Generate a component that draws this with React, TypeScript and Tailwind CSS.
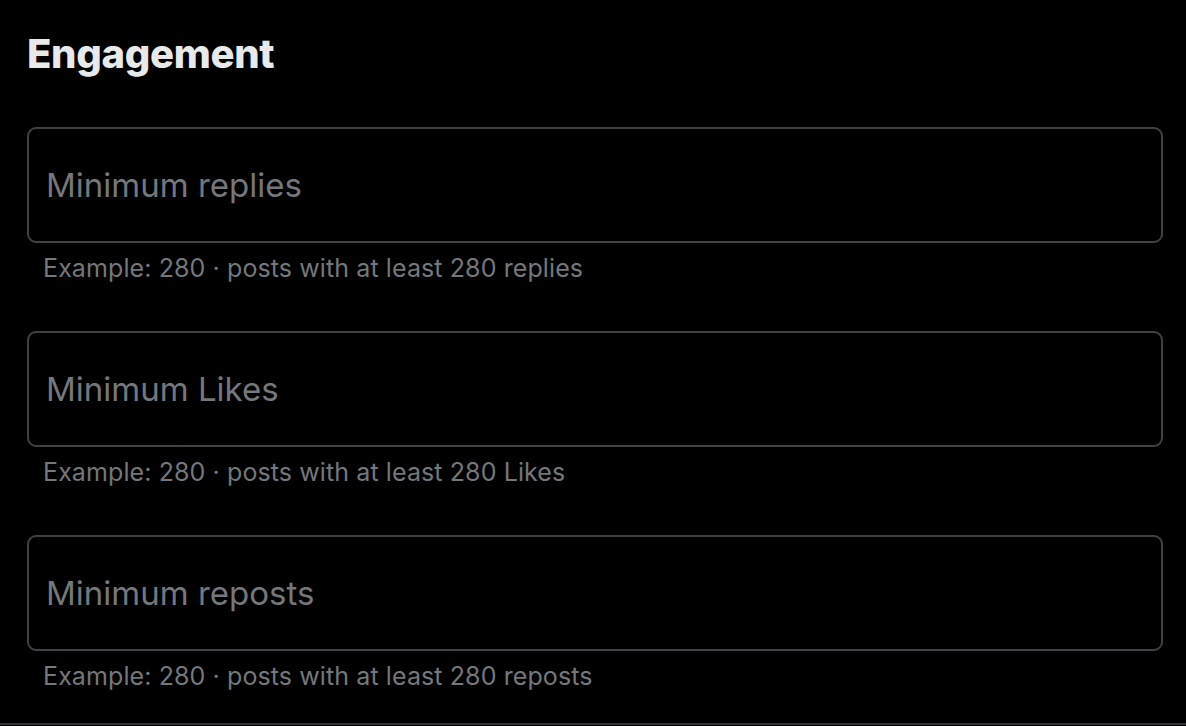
import React from 'react';

const fields = [
  { label: 'Minimum replies', hint: 'Example: 280 · posts with at least 280 replies' },
  { label: 'Minimum Likes', hint: 'Example: 280 · posts with at least 280 Likes' },
  { label: 'Minimum reposts', hint: 'Example: 280 · posts with at least 280 reposts' },
];

const App = () => {
  return (
    <div
      className="w-screen h-screen overflow-hidden bg-black text-[#e7e9ea]"
      style={{ fontFamily: 'Inter, "Liberation Sans", sans-serif' }}
    >
      <div className="border-b-2 border-[#2f3336] pl-[27px] pr-[23px] pt-[28px] pb-[30px]">
        <h2 className="text-[40px] leading-[52px] font-extrabold tracking-[-0.3px] mb-[47px]">Engagement</h2>

        <div className="flex flex-col gap-[46px]">
          {fields.map((f) => (
            <div key={f.label}>
              <input
                type="text"
                placeholder={f.label}
                className="w-full h-[116px] bg-black border-2 border-[#3e4144] rounded-[9px] px-[17px] text-[33px] text-[#e7e9ea] placeholder:text-[#74777b] outline-none"
              />
              <p className="mt-[8px] pl-[16px] text-[25px] leading-[34px] tracking-[0.1px] text-[#74777b]">{f.hint}</p>
            </div>
          ))}
        </div>
      </div>
    </div>
  );
};

export default App;
